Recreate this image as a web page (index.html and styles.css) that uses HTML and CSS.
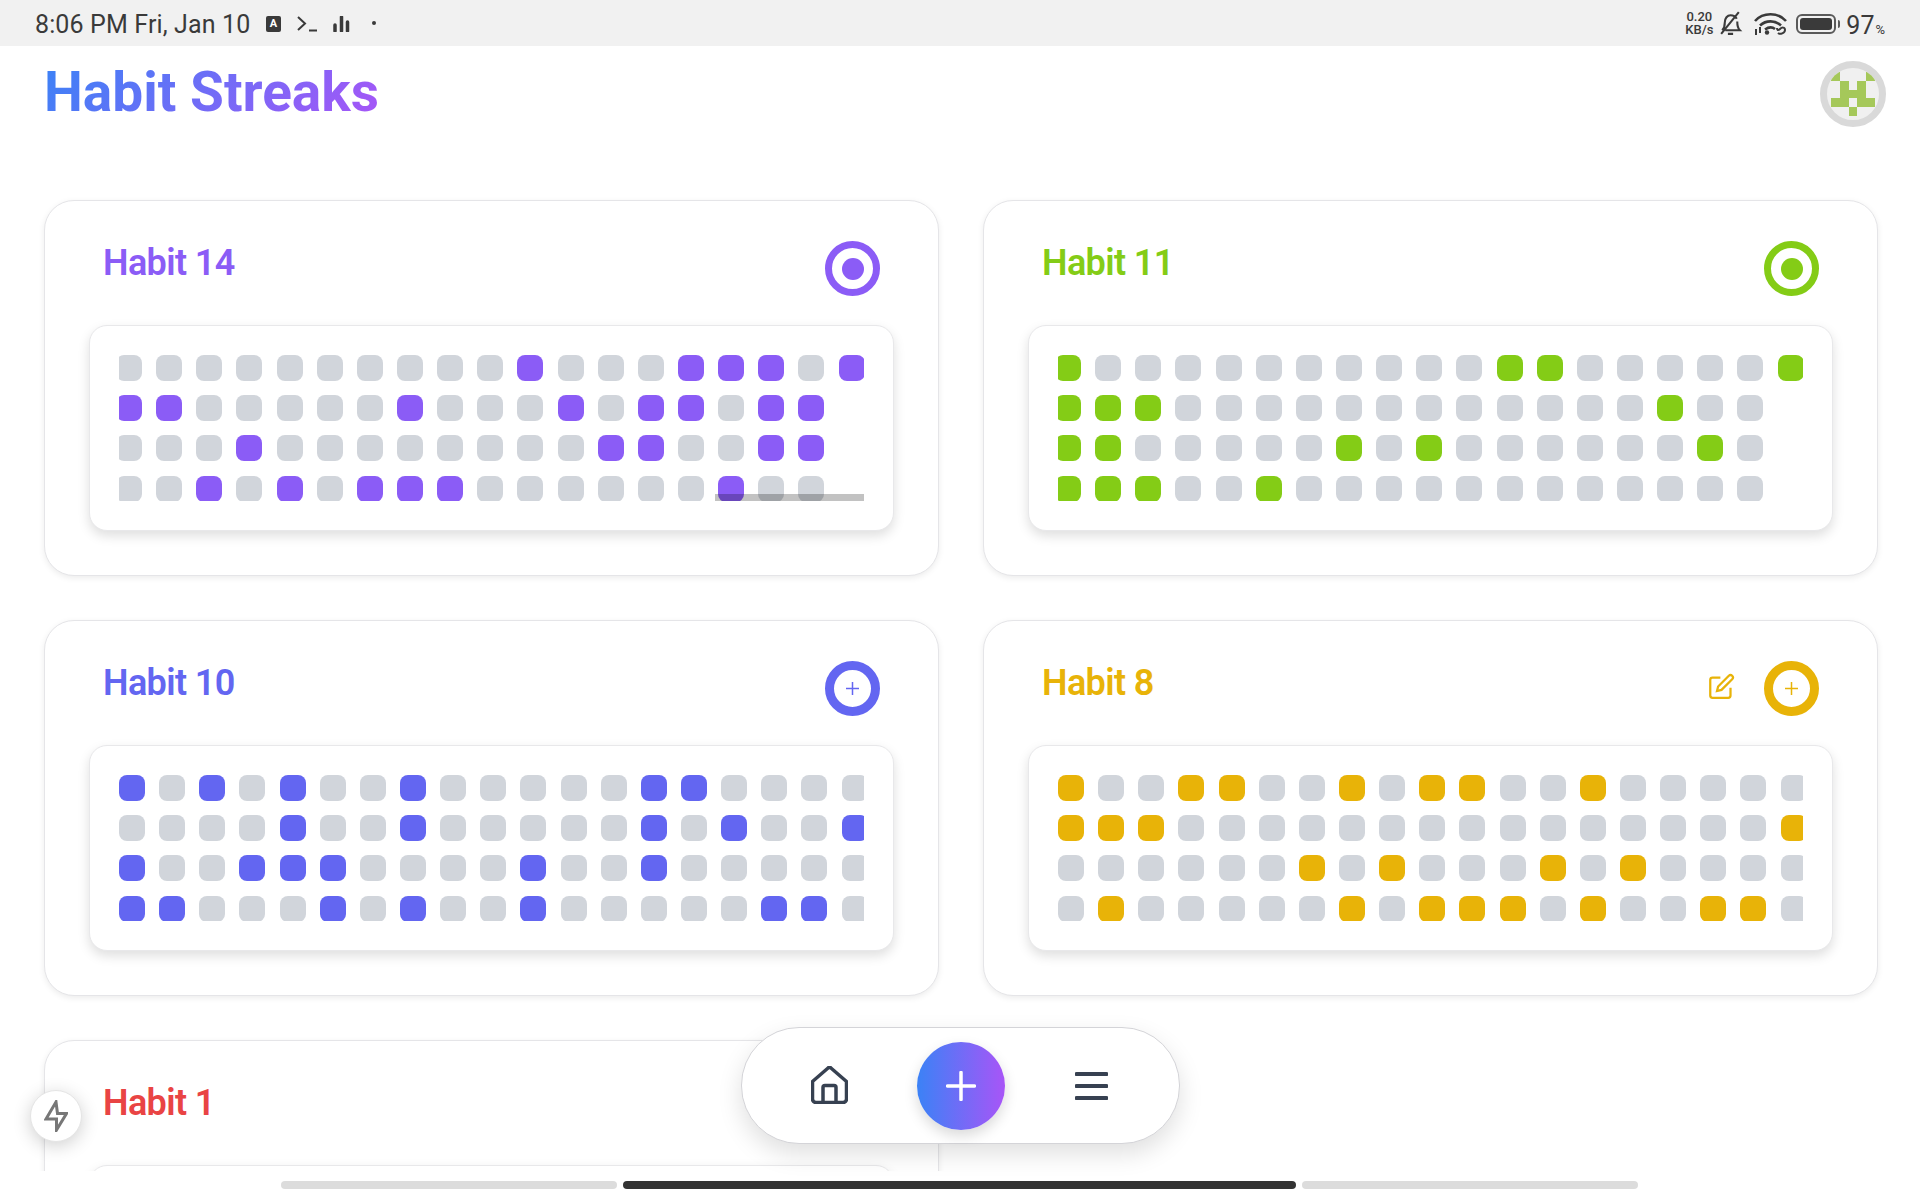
FILE: index.html
```html
<html>
 <head>
  <title>Habit Streaks</title>
  <meta name='viewport' content='width=device-width,initial-scale=1.0'>
  <link rel="stylesheet" href="styles.css">
 </head>
 <body>
  <div class='status'>
   <div class='status-left'>
    <span class='clock'>8:06 PM Fri, Jan 10</span>
    <span class='badge'>A</span>
    <svg class='ico-term' viewBox='0 0 21 16'><path d='M1 1l7 6.500L1 14M12 14.500h8'/></svg>
    <svg class='ico-bars' viewBox='0 0 17 16'><path d='M2 9v6M8.500 1v14M14.500 6v9'/></svg>
    <span class='dot'></span>
   </div>
   <div class='status-right'>
    <span class='speed'>0.20<br/>KB/s</span>
    <svg class='ico-bell' viewBox='0 0 24 26'><path d='M4 19.500c2-2 2.500-4 2.500-7.500 0-4 2.500-7 5.500-7s5 1.500 6 3.500M18.500 11c0 4 .5 6.500 2.500 8.500H7M9.500 23h5M3 23L20 2'/></svg>
    <svg class='ico-wifi' viewBox='0 0 35 25'><path d='M2 10C10 1 25 1 33 10M7 14.500c6-5.500 15-5.500 21 0M12 18.500c3.500-2.500 7.500-2.500 10 -.5'/><circle cx='14' cy='21.500' r='2.200'/><path class='thin' d='M3 18v6M7 16v6M25 22c2 2 7 0 7-3s-3-3-5-1-3 1-3 -1'/></svg>
    <span class='battery'><span class='battery-fill'></span></span>
    <span class='battery-nub'></span>
    <span class='percent'>97<small>%</small></span>
   </div>
  </div>

  <div class='page'>
   <div class='top'>
    <h1>Habit Streaks</h1>
    <div class='avatar'>
     <svg viewBox='0 0 5 5' shape-rendering='crispEdges'><path d='M0 0h1v1H0zM4 0h1v1H4zM1 1h1v1H1zM3 1h1v1H3zM1 2h3v1H1zM0 3h2v1H0zM3 3h2v1H3zM2 4h1v1H2z'/></svg>
    </div>
   </div>
   <div class='cards'>
    <div class='card purple'>
     <div class='head'>
      <h2>Habit 14</h2>
      <span class='ring'><span class='bull'></span></span>
     </div>
     <div class='panel'>
      <div class='strip'>
       <div class='days shift3' data-rows='0000000000100011101 110000010001011011 000100000000110011 001010111000000100'></div>
       <div class='scrollbar'></div>
      </div>
     </div>
    </div>
    <div class='card green'>
     <div class='head'>
      <h2>Habit 11</h2>
      <span class='ring'><span class='bull'></span></span>
     </div>
     <div class='panel'>
      <div class='strip'>
       <div class='days shift3' data-rows='1000000000011000001 111000000000000100 110000010100000010 111001000000000000'></div>
      </div>
     </div>
    </div>
    <div class='card indigo'>
     <div class='head'>
      <h2>Habit 10</h2>
      <span class='ring thick'><svg class='plus-sm' viewBox='0 0 13 13'><path d='M6.500 0v13M0 6.500h13'/></svg></span>
     </div>
     <div class='panel'>
      <div class='strip'>
       <div class='days' data-rows='1010100100000110000 0000100100000101001 1001110000100100000 1100010100100000110'></div>
      </div>
     </div>
    </div>
    <div class='card amber'>
     <div class='head'>
      <h2>Habit 8</h2>
      <svg class='edit' viewBox='0 0 24 24'><path d='M11 4H4a2 2 0 0 0-2 2v14a2 2 0 0 0 2 2h14a2 2 0 0 0 2-2v-7'/><path d='M18.500 2.500a2.120 2.120 0 0 1 3 3L12 15l-4 1 1-4z'/></svg>
      <span class='ring thick'><svg class='plus-sm' viewBox='0 0 13 13'><path d='M6.500 0v13M0 6.500h13'/></svg></span>
     </div>
     <div class='panel'>
      <div class='strip'>
       <div class='days' data-rows='1001100101100100000 1110000000000000001 0000001010001010000 0100000101110100110'></div>
      </div>
     </div>
    </div>
    <div class='card red'>
     <div class='head'>
      <h2>Habit 1</h2>
     </div>
     <div class='panel'></div>
    </div>
   </div>
  </div>

  <div class='gesture'>
   <span class='pill'></span>
   <span class='pill wide'></span>
   <span class='pill'></span>
  </div>

  <div class='nav'>
   <svg class='ico-home' viewBox='0 0 37 38'><path d='M1.500 15.500L16.800 2.200a2.600 2.600 0 0 1 3.400 0L35.500 15.500V33a3.500 3.500 0 0 1-3.500 3.500H5A3.500 3.500 0 0 1 1.500 33z'/><path d='M12 36.500V21.500a2 2 0 0 1 2-2h9a2 2 0 0 1 2 2v15'/></svg>
   <span class='fab'><svg viewBox='0 0 30 30'><path d='M15 1.500v27M1.500 15h27'/></svg></span>
   <svg class='ico-menu' viewBox='0 0 33 28'><path d='M1.500 2h30M1.500 14h30M1.500 26h30'/></svg>
  </div>

  <div class='quick'>
   <svg viewBox='0 0 24 32'><path d='M12 2L2 19h10.500v11L22.500 13.500H13.500z'/></svg>
  </div>

  <script>
   document.querySelectorAll('.days').forEach( d => {
    d.dataset.rows.split(' ').forEach( r => {
     row = document.createElement('div');
     row.className = 'row';
     row.innerHTML = [...r].map( c => c == '1' ? "<i class='on'></i>" : '<i></i>' ).join('');
     d.appendChild(row);
    });
   });
  </script>
 </body>
</html>
```

FILE: styles.css
```css
* {box-sizing:border-box; font-family:Roboto, "Liberation Sans", sans-serif}
html, body {margin:0; height:1200px; overflow:hidden; background:#fff}
body {display:flex; flex-direction:column; position:relative}

.status {height:46px; flex:none; background:#f1f1f1; color:#3a3a3a; display:flex; justify-content:space-between; align-items:center; padding:3px 35px 0}
.status-left, .status-right {display:flex; align-items:center}
.clock {font-size:25px; line-height:43px; letter-spacing:.13px; width:231px}
.badge {width:15px; height:16px; border-radius:2px; background:#3a3a3a; color:#fff; font-size:11px; font-weight:700; line-height:15px; text-align:center; margin:-2px 16px 0 0}
.ico-term {width:21px; height:16px; fill:none; stroke:#3a3a3a; stroke-width:2; margin:-2px 15px 0 0}
.ico-bars {width:17px; height:16px; fill:none; stroke:#3a3a3a; stroke-width:3.500; stroke-linecap:round; margin:-2px 22px 0 0}
.dot {width:4px; height:4px; border-radius:50%; background:#3a3a3a; margin-top:-4px}

.speed {font-size:13px; font-weight:500; line-height:13px; text-align:center; width:30px; margin:-3px 4px 0 0}
.ico-bell {width:25px; height:27px; fill:none; stroke:#3a3a3a; stroke-width:2; margin:-2px 10px 0 0}
.ico-wifi {width:35px; height:25px; fill:none; stroke:#3a3a3a; stroke-width:2.600; margin:-2px 8px 0 0}
.ico-wifi circle {fill:#3a3a3a; stroke:none}
.ico-wifi .thin {stroke-width:2}
.battery {width:40px; height:20px; border:2px solid #5a5a5a; border-radius:6px; padding:2px; display:flex; margin-top:-2px}
.battery-fill {flex:1; background:#3a3a3a; border-radius:3px}
.battery-nub {width:2px; height:8px; background:#5a5a5a; border-radius:0 2px 2px 0; margin:-2px 6px 0 2px}
.percent {font-size:25px; line-height:43px; margin-top:2px}
.percent small {font-size:13px; line-height:13px; margin-left:1px}

.page {flex:1; min-height:0; overflow:hidden}
.top {height:154px; display:flex; justify-content:space-between; align-items:flex-start; padding:16px 34px 0 44px}
h1 {margin:0; font-size:55px; line-height:60px; font-weight:700; background:linear-gradient(135deg, #3b82f6, #a855f7); -webkit-background-clip:text; background-clip:text; color:transparent}
.avatar {width:66px; height:66px; border-radius:50%; border:7px solid #d9d9d9; background:#f0f0f0; overflow:hidden; display:flex; align-items:center; justify-content:center; margin-top:-1px}
.avatar svg {width:44px; height:44px; flex:none; fill:#a5c85a}

.cards {display:grid; grid-template-columns:895px 895px; gap:44px; padding:0 42px 0 44px}
.card {height:376px; border:1px solid #e5e5e8; border-radius:30px; padding:40px 44px; background:#fff; box-shadow:0 2px 6px #00000014; color:var(--c)}
.purple {--c:#8b5cf6}
.green {--c:#84cc16}
.indigo {--c:#6366f1}
.amber {--c:#e8b308}
.red {--c:#e94444}

.head {height:84px; display:flex; align-items:flex-start; padding:0 14px}
h2 {margin:1px auto 0 0; font-size:36px; line-height:42px; font-weight:600; letter-spacing:-.6px; color:var(--c)}
.ring {width:55px; height:55px; border-radius:50%; border:7px solid var(--c); display:flex; align-items:center; justify-content:center; flex:none}
.ring.thick {border-width:9px}
.bull {width:22px; height:22px; border-radius:50%; background:var(--c)}
.plus-sm {width:13px; height:13px; fill:none; stroke:var(--c); stroke-width:1.500}
.edit {width:27px; height:27px; fill:none; stroke:var(--c); stroke-width:2; margin:12px 29px 0 0}

.panel {height:206px; border:1px solid #e8e8ea; border-radius:18px; padding:29px; background:#fff; box-shadow:0 5px 12px #00000021}
.strip {overflow:hidden; position:relative; height:146px}
.days {display:flex; flex-direction:column; gap:14.200px}
.shift3 {margin-left:-3px}
.row {display:flex; gap:14.150px}
.row i {flex:none; width:26px; height:26px; border-radius:8px; background:#d1d5db}
.row i.on {background:var(--c)}
.scrollbar {position:absolute; right:0; bottom:0; width:149px; height:7px; background:#0000003d}

.gesture {height:29px; flex:none; background:#fff; display:flex; justify-content:center; gap:6px; padding:10px 1px 0 0; position:relative}
.pill {width:336px; height:8px; border-radius:4px; background:#dcdcdc}
.pill.wide {width:673px; background:#333}

.nav {position:absolute; left:741px; top:1027px; width:439px; height:117px; border-radius:58px; border:1px solid #d4d4d8; background:#fff; box-shadow:0 10px 24px #00000020; display:grid; grid-template-columns:repeat(3,131px); justify-content:center; justify-items:center; align-items:center}
.ico-home {width:37px; height:38px; fill:none; stroke:#374151; stroke-width:3.500; stroke-linejoin:round; margin-top:-2px}
.ico-menu {width:33px; height:28px; fill:none; stroke:#374151; stroke-width:4; stroke-linecap:round}
.fab {width:88px; height:88px; border-radius:50%; background:linear-gradient(90deg, #3b82f6, #a855f7); box-shadow:0 6px 14px #00000026; display:flex; align-items:center; justify-content:center}
.fab svg {width:30px; height:30px; fill:none; stroke:#fff; stroke-width:3.500; stroke-linecap:round}

.quick {position:absolute; left:30px; top:1090px; width:52px; height:52px; border-radius:50%; background:#fff; border:1px solid #e5e5e5; box-shadow:0 4px 18px #00000030; display:flex; align-items:center; justify-content:center}
.quick svg {width:24px; height:32px; fill:none; stroke:#777; stroke-width:3}
```
